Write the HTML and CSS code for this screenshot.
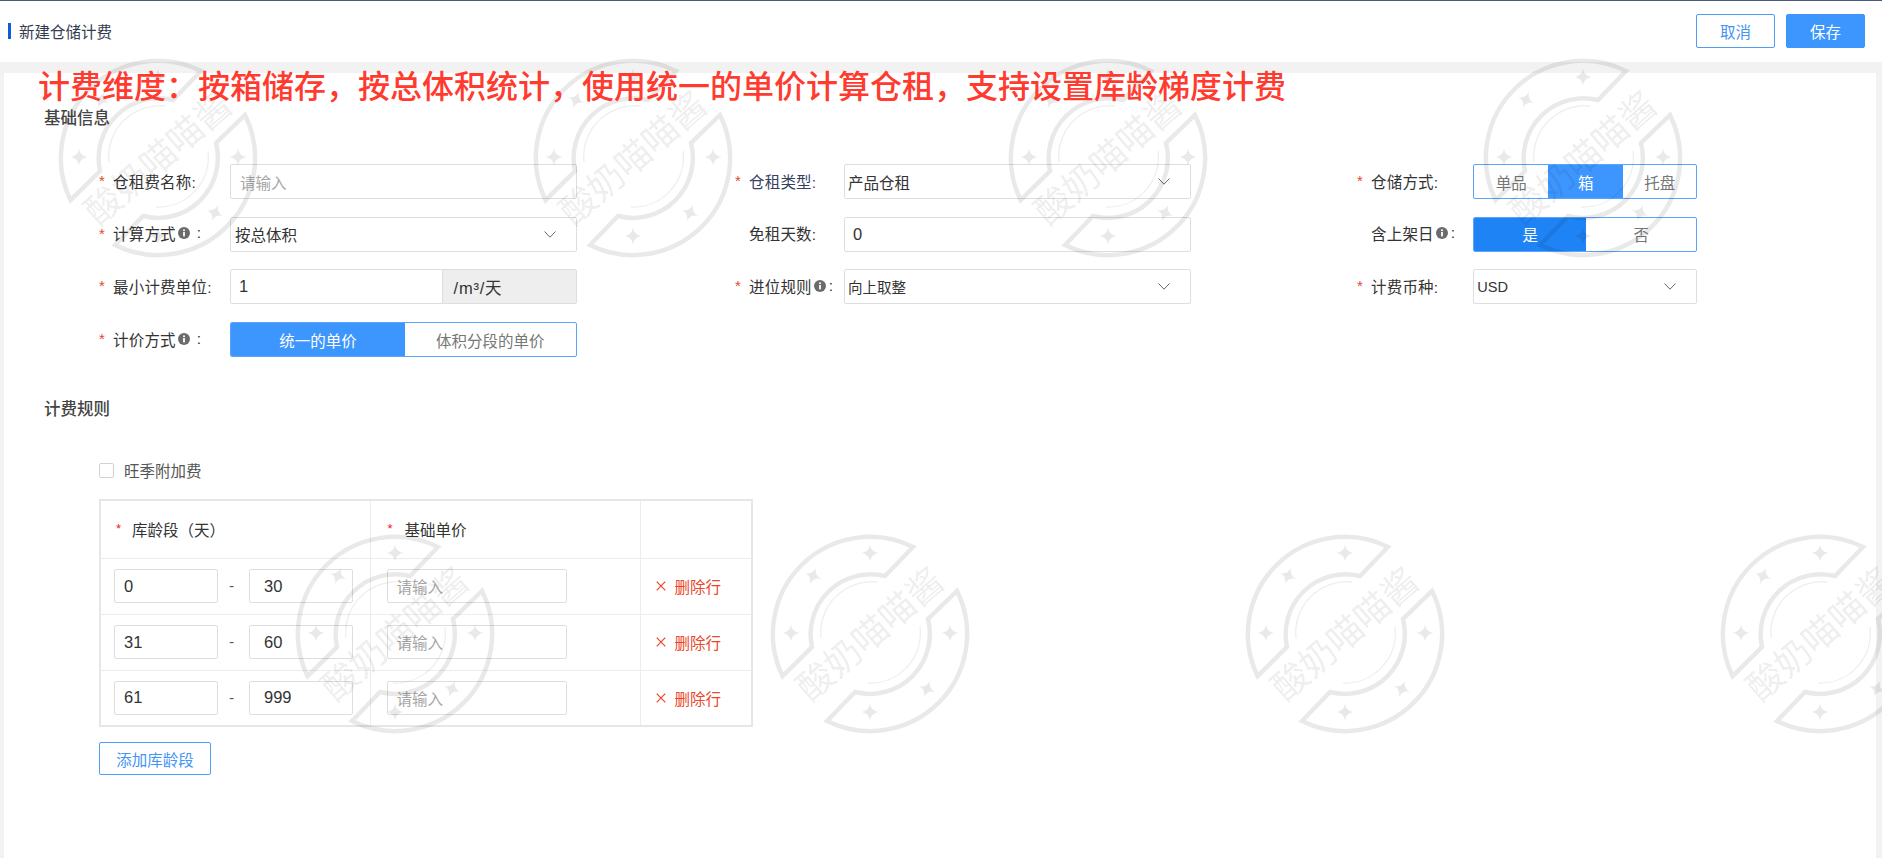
FILE: index.html
```html
<!DOCTYPE html>
<html lang="zh-CN">
<head>
<meta charset="utf-8">
<title>新建仓储计费</title>
<link rel="stylesheet" href="styles.css">
</head>
<body>
<header class="topbar">
  <div class="page-title"><span class="title-bar"></span><span>新建仓储计费</span></div>
  <div class="top-actions">
    <button class="btn btn-outline btn-top">取消</button>
    <button class="btn btn-primary btn-top">保存</button>
  </div>
</header>

<main class="card">
  <h2 class="section-title">基础信息</h2>
  <div class="form-grid">
    <div class="field col-a">
      <div class="label"><i class="req">*</i><span>仓租费名称:</span></div>
      <div class="control"><span class="placeholder pad-ph">请输入</span></div>
    </div>
    <div class="field col-b">
      <div class="label"><i class="req">*</i><span class="navy">仓租类型:</span></div>
      <div class="control select"><span>产品仓租</span><svg class="chev" viewBox="0 0 12 7"><path d="M.5.5 6 6.2 11.5.5"/></svg></div>
    </div>
    <div class="field col-c">
      <div class="label"><i class="req">*</i><span>仓储方式:</span></div>
      <div class="seg">
        <span class="seg-item w-74">单品</span><span class="seg-item w-75 on">箱</span><span class="seg-item grow">托盘</span>
      </div>
    </div>

    <div class="field col-a">
      <div class="label"><i class="req">*</i><span>计算方式</span><svg class="info" viewBox="0 0 12 12"><circle cx="6" cy="6" r="6"/><rect class="i" x="5.1" y="5" width="1.8" height="4.4"/><rect class="i" x="5.1" y="2.4" width="1.8" height="1.7"/></svg><span class="colon-gap">:</span></div>
      <div class="control select"><span>按总体积</span><svg class="chev" viewBox="0 0 12 7"><path d="M.5.5 6 6.2 11.5.5"/></svg></div>
    </div>
    <div class="field col-b">
      <div class="label"><span>免租天数:</span></div>
      <div class="control"><span class="pad-v num">0</span></div>
    </div>
    <div class="field col-c">
      <div class="label"><span>含上架日</span><svg class="info" viewBox="0 0 12 12"><circle cx="6" cy="6" r="6"/><rect class="i" x="5.1" y="5" width="1.8" height="4.4"/><rect class="i" x="5.1" y="2.4" width="1.8" height="1.7"/></svg><span>:</span></div>
      <div class="seg">
        <span class="seg-item w-112 on deep">是</span><span class="seg-item grow">否</span>
      </div>
    </div>

    <div class="field col-a">
      <div class="label"><i class="req">*</i><span>最小计费单位:</span></div>
      <div class="control addon-wrap"><span class="pad-l grow num">1</span><span class="addon num">/m³/天</span></div>
    </div>
    <div class="field col-b">
      <div class="label"><i class="req">*</i><span>进位规则</span><svg class="info" viewBox="0 0 12 12"><circle cx="6" cy="6" r="6"/><rect class="i" x="5.1" y="5" width="1.8" height="4.4"/><rect class="i" x="5.1" y="2.4" width="1.8" height="1.7"/></svg><span>:</span></div>
      <div class="control select small"><span>向上取整</span><svg class="chev" viewBox="0 0 12 7"><path d="M.5.5 6 6.2 11.5.5"/></svg></div>
    </div>
    <div class="field col-c">
      <div class="label"><i class="req">*</i><span>计费币种:</span></div>
      <div class="control select usd"><span>USD</span><svg class="chev" viewBox="0 0 12 7"><path d="M.5.5 6 6.2 11.5.5"/></svg></div>
    </div>

    <div class="field col-a">
      <div class="label"><i class="req">*</i><span>计价方式</span><svg class="info" viewBox="0 0 12 12"><circle cx="6" cy="6" r="6"/><rect class="i" x="5.1" y="5" width="1.8" height="4.4"/><rect class="i" x="5.1" y="2.4" width="1.8" height="1.7"/></svg><span class="colon-gap">:</span></div>
      <div class="seg">
        <span class="seg-item w-174 on">统一的单价</span><span class="seg-item grow">体积分段的单价</span>
      </div>
    </div>
  </div>

  <h2 class="section-title rules-title">计费规则</h2>
  <label class="check-row"><span class="checkbox"></span><span>旺季附加费</span></label>

  <table class="rule-table">
    <colgroup><col class="c1"><col class="c2"><col class="c3"></colgroup>
    <thead>
      <tr>
        <th><i class="req-th">*</i>库龄段（天）</th>
        <th><i class="req-th">*</i>基础单价</th>
        <th></th>
      </tr>
    </thead>
    <tbody>
      <tr>
        <td><div class="range"><span class="mini num">0</span><span class="dash">-</span><span class="mini num">30</span></div></td>
        <td><span class="price placeholder">请输入</span></td>
        <td><span class="del"><svg class="x" viewBox="0 0 10 10"><path d="M.7.7 9.3 9.3M9.3.7.7 9.3"/></svg>删除行</span></td>
      </tr>
      <tr>
        <td><div class="range"><span class="mini num">31</span><span class="dash">-</span><span class="mini num">60</span></div></td>
        <td><span class="price placeholder">请输入</span></td>
        <td><span class="del"><svg class="x" viewBox="0 0 10 10"><path d="M.7.7 9.3 9.3M9.3.7.7 9.3"/></svg>删除行</span></td>
      </tr>
      <tr>
        <td><div class="range"><span class="mini num">61</span><span class="dash">-</span><span class="mini num">999</span></div></td>
        <td><span class="price placeholder">请输入</span></td>
        <td><span class="del"><svg class="x" viewBox="0 0 10 10"><path d="M.7.7 9.3 9.3M9.3.7.7 9.3"/></svg>删除行</span></td>
      </tr>
    </tbody>
  </table>
  <button class="btn btn-outline btn-add">添加库龄段</button>
</main>

<svg class="watermarks" viewBox="0 0 1882 858" width="1882" height="858">
  <defs>
    <path id="wm-star" d="M0,-8.5 Q1,-1 8.5,0 Q1,1 0,8.5 Q-1,1 -8.5,0 Q-1,-1 0,-8.5Z"/>
    <g id="wm">
      <path class="wm-line" d="M43,-87 A97,97 0 0 0 -87.4,42.2 L-58,13 A60,60 0 0 1 15,-58 Z"/>
      <path class="wm-line" d="M87,-43 A97,97 0 0 1 -43,87 L-15,58 A60,60 0 0 0 58,-15 Z"/>
      <path class="wm-thin" d="M-49,4 A51,51 0 0 1 7,-52"/>
      <path class="wm-thin" d="M50,-7 A50,50 0 0 1 -2,49"/>
      <use href="#wm-star" x="0" y="-81"/>
      <use href="#wm-star" transform="translate(-57,-58) rotate(20)"/>
      <use href="#wm-star" x="-79" y="-1"/>
      <use href="#wm-star" x="80" y="-1"/>
      <use href="#wm-star" transform="translate(57,55) rotate(20)"/>
      <use href="#wm-star" x="0" y="78"/>
      <text class="wm-text" transform="rotate(-41)" x="0" y="13" text-anchor="middle">酸奶喵喵酱</text>
    </g>
  </defs>
  <use href="#wm" x="158" y="158"/>
  <use href="#wm" x="633" y="158"/>
  <use href="#wm" x="1108" y="158"/>
  <use href="#wm" x="1583" y="158"/>
  <use href="#wm" x="395" y="634"/>
  <use href="#wm" x="870" y="634"/>
  <use href="#wm" x="1345" y="634"/>
  <use href="#wm" x="1820" y="634"/>
</svg>

<div class="headline">计费维度：按箱储存，按总体积统计，使用统一的单价计算仓租，支持设置库龄梯度计费</div>
</body>
</html>
```

FILE: styles.css
```css
* { box-sizing: border-box; }
html, body { margin: 0; padding: 0; }
body {
  position: relative;
  width: 1882px;
  height: 858px;
  overflow: hidden;
  background: #f2f2f2;
  color: #333;
  font-family: "Liberation Sans", "Noto Sans CJK SC", sans-serif;
  font-size: 15.5px;
}
i { font-style: normal; }

/* top bar */
.topbar {
  display: flex;
  align-items: center;
  justify-content: space-between;
  height: 62px;
  padding: 0 17px 1px 8px;
  background: #fff;
  border-top: 1px solid #4a5a7a;
}
.page-title { display: flex; align-items: center; gap: 8px; font-size: 15.5px; color: #333c4e; }
.title-bar { width: 3px; height: 16px; background: #0f5bd8; }
.top-actions { display: flex; gap: 11px; }

.btn {
  font-family: inherit;
  border-radius: 2px;
  padding: 0;
  cursor: pointer;
}
.btn-top { width: 79px; height: 34px; font-size: 15.5px; }
.btn-outline { background: #fff; border: 1px solid #4f9df5; color: #4494f2; }
.btn-primary { background: #3d96fd; border: 1px solid #3d96fd; color: #fff; }

/* card */
.card {
  height: 785px;
  margin: 11px 6px 0 4px;
  padding: 35px 0 0 40px;
  background: #fff;
}
.section-title {
  margin: 0;
  font-size: 16.5px;
  line-height: 20px;
  font-weight: 500;
  color: #444;
}
.form-grid {
  display: grid;
  grid-template-columns: 636px 622px 340px;
  grid-auto-rows: 35px;
  row-gap: 17.7px;
  margin: 36px 0 0 55px;
}
.field { display: flex; align-items: stretch; }
.col-a .label { width: 131px; }
.col-a .control, .col-a .seg { width: 346.5px; }
.col-a .select { padding-left: 4px; }
.col-b .label { width: 109px; }
.col-b .control { width: 346.5px; }
.col-c .label { width: 116.5px; }
.col-c .control, .col-c .seg { width: 224px; }

.label {
  position: relative;
  display: flex;
  align-items: center;
  padding-left: 14px;
  padding-bottom: 2px;
  white-space: nowrap;
  letter-spacing: 0.2px;
  color: #333;
}
.navy { color: #34415f; }
.req {
  position: absolute;
  left: 0;
  top: 9px;
  color: #e8472a;
  font-size: 15px;
  line-height: 15px;
}
.info { width: 12px; height: 12px; margin: 0 3px 0 2px; flex: none; }
.info circle { fill: #6b6b6b; }
.info .i { fill: #fff; }
.colon-gap { margin-left: 4px; }

.control {
  display: flex;
  align-items: center;
  border: 1px solid #dedede;
  border-radius: 2px;
  background: #fff;
  white-space: nowrap;
  color: #333;
}
.select { justify-content: space-between; padding: 0 20px 0 3px; }
.select.small { font-size: 14.5px; }
.select.usd { font-size: 14.6px; }
.chev { width: 12px; height: 7px; fill: none; stroke: #666; stroke-width: 1; }
.placeholder { color: #a6a6a6; }
.pad-l { padding-left: 8px; }
.pad-ph { padding-left: 9px; }
.pad-v { padding-left: 8px; }
.num { font-size: 16.5px; }
.grow { flex: 1; }
.addon-wrap { align-items: stretch; }
.addon-wrap > span { display: flex; align-items: center; }
.addon {
  width: 134px;
  padding-left: 11px;
  background: #eee;
  border-left: 1px solid #dedede;
  letter-spacing: 0.8px;
}

.seg {
  display: flex;
  border: 1px solid #5aa5fb;
  border-radius: 2px;
  overflow: hidden;
  background: #fff;
}
.seg-item {
  display: flex;
  align-items: center;
  justify-content: center;
  color: #777;
  white-space: nowrap;
}
.seg-item.on { background: #3d96fd; color: #fff; }
.seg-item.deep { background: #1e84f5; }
.w-74 { width: 74px; }
.w-75 { width: 75px; }
.w-112 { width: 112px; }
.w-174 { width: 174px; }

/* rules */
.rules-title { margin-top: 42px; }
.check-row {
  display: flex;
  align-items: center;
  gap: 10px;
  height: 20px;
  margin: 41px 0 0 55px;
  color: #555;
}
.checkbox {
  width: 15px;
  height: 15px;
  background: #fff;
  border: 1px solid #d2d2d2;
  border-radius: 2px;
}

.rule-table {
  width: 652px;
  margin: 19px 0 0 55px;
  border-collapse: collapse;
  table-layout: fixed;
  border: 2px solid #e6e6e6;
}
.c1 { width: 270px; }
.c2 { width: 270px; }
.c3 { width: 112px; }
.rule-table th, .rule-table td {
  padding: 0;
  border: 1px solid #ececec;
  text-align: left;
  vertical-align: middle;
}
.rule-table thead tr { height: 58px; }
.rule-table tbody tr { height: 56px; }
.rule-table th {
  position: relative;
  padding-left: 31px;
  font-weight: 400;
  color: #333;
}
.rule-table th + th { padding-left: 34px; }
.req-th {
  position: absolute;
  left: 15px;
  top: 21px;
  color: #f02020;
  font-size: 13px;
  line-height: 13px;
}
.rule-table th + th .req-th { left: 17px; }

.range { display: flex; align-items: center; padding-left: 13px; }
.mini, .price {
  display: flex;
  align-items: center;
  height: 34px;
  border: 1px solid #dedede;
  border-radius: 2px;
}
.mini { width: 104px; padding-left: 9px; background: transparent; }
.dash { width: 31px; text-align: center; color: #555; padding-right: 4px; }
.dash + .mini { padding-left: 14px; }
.rule-table td + td .price { width: 180px; margin-left: 16px; padding-left: 9px; }
.del { display: flex; align-items: center; padding-left: 15px; color: #e8472a; }
.x { width: 10px; height: 10px; margin-right: 9px; fill: none; stroke: #e8472a; stroke-width: 1.2; }
.btn-add {
  display: block;
  width: 112px;
  height: 33px;
  margin: 15px 0 0 55px;
  font-size: 15.5px;
}

/* overlays */
.watermarks {
  position: absolute;
  left: 0;
  top: 0;
  pointer-events: none;
  fill: #000;
  fill-opacity: 0.085;
}
.wm-line { fill: none; stroke: #000; stroke-opacity: 0.085; stroke-width: 4.5; stroke-linejoin: miter; }
.wm-thin { fill: none; stroke: #000; stroke-opacity: 0.07; stroke-width: 1.3; }
.wm-text {
  font-family: "Noto Sans CJK SC", sans-serif;
  font-size: 36px;
  font-weight: 400;
}
.headline {
  position: absolute;
  left: 38px;
  top: 64px;
  font-family: "Noto Sans CJK SC", sans-serif;
  font-size: 32px;
  font-weight: 500;
  line-height: 40px;
  color: #ff3b30;
  white-space: nowrap;
}
```
